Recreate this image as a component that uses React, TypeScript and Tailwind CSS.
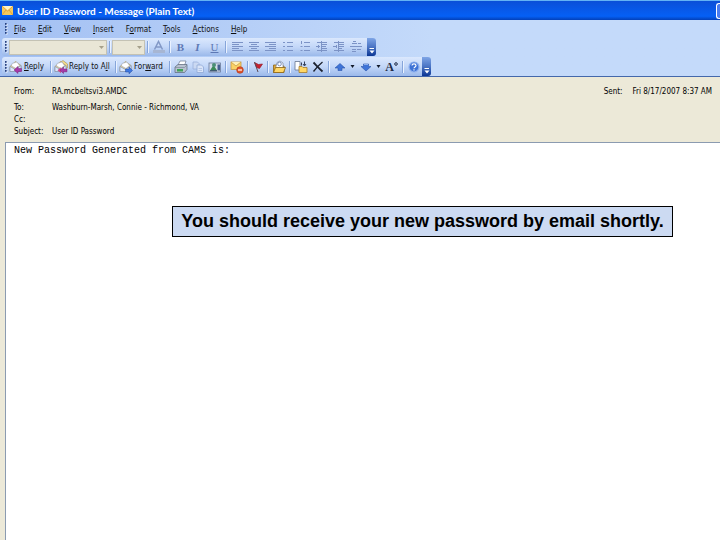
import type { ReactNode } from 'react'
import clsx from 'clsx'

type IconProps = { children: ReactNode }

function Icon({ children }: IconProps) {
  return (
    <svg viewBox="0 0 14 14" className="h-3.5 w-3.5 shrink-0" fill="none" aria-hidden="true">
      {children}
    </svg>
  )
}

function ToolButton({ label, narrow, disabled, children }: { label: string; narrow?: boolean; disabled?: boolean; children: ReactNode }) {
  return (
    <button
      type="button"
      aria-label={label}
      disabled={disabled}
      className={clsx('flex h-full shrink-0 items-center justify-center', narrow ? 'w-[15px]' : 'w-[17px]')}
    >
      {children}
    </button>
  )
}

function Separator() {
  return (
    <span className="flex h-3 w-[5px] shrink-0 justify-center">
      <span className="w-px bg-[#86a5da]" />
      <span className="w-px bg-[#eaf2ff]" />
    </span>
  )
}

function Grip() {
  return (
    <svg viewBox="0 0 4 12" className="h-3 w-1 shrink-0" aria-hidden="true">
      {[0, 3, 6, 9].map((y) => (
        <g key={y}>
          <rect x="2" y={y + 1} width="1.5" height="1.5" fill="#f4f8ff" />
          <rect x="1" y={y} width="1.6" height="1.8" fill="#27417f" />
        </g>
      ))}
    </svg>
  )
}

function Caret() {
  return (
    <button type="button" aria-label="More" className="flex h-full w-[9px] shrink-0 items-center justify-center">
      <svg viewBox="0 0 5 3" className="h-[3px] w-[5px]" aria-hidden="true">
        <path d="M0.5 0h4L2.5 3z" fill="#101828" />
      </svg>
    </button>
  )
}

function ToolbarEnd() {
  return (
    <button
      type="button"
      aria-label="Toolbar options"
      className="flex h-full w-[9px] shrink-0 items-end justify-center rounded-r-[3px] bg-linear-to-b from-[#7fa5e6] via-[#4a74c4] to-[#0b3593] pb-0.5"
    >
      <svg viewBox="0 0 6 6" className="h-1.5 w-1.5" aria-hidden="true">
        <path d="M0.5 0h4.5v1H0.5zM0.5 2.5h5L3 5.5z" fill="#fff" />
      </svg>
    </button>
  )
}

function Combo({ label, wide }: { label: string; wide?: boolean }) {
  return (
    <span className={clsx('relative h-[15px] shrink-0', wide ? 'w-[98px]' : 'w-[33px]')}>
      <select
        aria-label={label}
        disabled
        className="block h-full w-full appearance-none border border-[#c4c2b4] bg-[#e9e6d6] opacity-100"
      />
      <svg viewBox="0 0 5 3" className="absolute top-1.5 right-[3px] h-[3px] w-[5px]" aria-hidden="true">
        <path d="M0 0h5L2.5 3z" fill="#a5a08b" />
      </svg>
    </span>
  )
}

function Envelope() {
  return (
    <>
      <path d="M1 6.5L6.5 1.5L12 5.5V11.5H1z" fill="#f5d77b" stroke="#a89a68" strokeWidth="0.7" />
      <path d="M3 3.5L8 2L10.5 5.5L7 8.5L2.5 6z" fill="#fff" stroke="#9aa5bd" strokeWidth="0.6" />
      <path d="M1 6.5L6.5 9.5L12 5.5V11.5H1z" fill="#dce8fb" stroke="#7f92ba" strokeWidth="0.7" />
    </>
  )
}

function ReplyIcon() {
  return (
    <Icon>
      <Envelope />
      <path d="M5 10L9 6.5V8.5H12.5V11.5H9V13.5z" fill="#a838a8" stroke="#74207a" strokeWidth="0.5" />
    </Icon>
  )
}

function ReplyAllIcon() {
  return (
    <Icon>
      <path d="M4 4L9 0.5L13.5 4V8H4z" fill="#f7dc8a" stroke="#a89a68" strokeWidth="0.7" />
      <Envelope />
      <path d="M3.5 10.3L7 7.3V13.3z" fill="#d04a8c" />
      <path d="M6 10.3L9.5 7V9H13V11.8H9.5V13.5z" fill="#a838a8" stroke="#74207a" strokeWidth="0.5" />
    </Icon>
  )
}

function ForwardIcon() {
  return (
    <Icon>
      <Envelope />
      <path d="M13.5 10.5L10 7V9H6.5V12H10V13.8z" fill="#3e78e0" stroke="#1c459c" strokeWidth="0.5" />
    </Icon>
  )
}

function LinesIcon({ d }: { d: string }) {
  return (
    <Icon>
      <path d={d} stroke="#7c93c6" strokeWidth="1" />
    </Icon>
  )
}

const menus = ['File', 'Edit', 'View', 'Insert', 'Format', 'Tools', 'Actions', 'Help']
// index of the underlined letter in each menu name
const accelerators = [0, 0, 0, 0, 1, 0, 0, 0]

const paragraphTools = [
  { label: 'Align left', d: 'M2 2.5h11M2 4.5h7M2 6.5h11M2 8.5h7M2 10.5h11' },
  { label: 'Center', d: 'M2 2.5h10M4 4.5h6M2 6.5h10M4 8.5h6M2 10.5h10' },
  { label: 'Align right', d: 'M1 2.5h11M5 4.5h7M1 6.5h11M5 8.5h7M1 10.5h11' },
  { label: 'Bullets', d: 'M2 2.5h2M2 6.5h2M2 10.5h2M6 2.5h6M6 6.5h6M6 10.5h6' },
  { label: 'Numbering', d: 'M3.5 1v3M2.5 6.5h2M2.5 10.5h2M6 2.5h6M6 6.5h6M6 10.5h6' },
  { label: 'Decrease indent', d: 'M2 2.5h10M7 4.5h5M1 6.5h4M7 6.5h4M7 8.5h5M2 10.5h10M3.5 5v3M6.5 1v11' },
  { label: 'Increase indent', d: 'M2 2.5h10M7 4.5h5M1 6.5h4M7 6.5h5M7 8.5h3M2 10.5h10M4.5 5v3M6.5 1v11' },
  { label: 'Horizontal line', d: 'M4 1.5h3M3 3.5h5M9 3.5h3M1 6.5h12M3 9.5h4M8 9.5h4M3 11.5h4' },
]

const fields = [
  { name: 'To:', value: 'Washburn-Marsh, Connie - Richmond, VA' },
  { name: 'Cc:', value: '' },
  { name: 'Subject:', value: 'User ID Password' },
]

function TitleBar() {
  return (
    <header className="flex h-5 items-center overflow-hidden border-t border-[#63b2f5] bg-linear-to-b from-[#0a4fd8] via-[#0560f5] via-80% to-[#0340b8] pl-0.5">
      <svg viewBox="0 0 11 9" className="h-[9px] w-[11px] shrink-0" aria-hidden="true">
        <rect width="11" height="9" fill="#f6c95c" />
        <path d="M0 0L5.5 4.5L11 0z" fill="#fff3c4" />
        <path d="M0 0L5.5 5L11 0M0 9L4 4M11 9L7 4" stroke="#d4902b" strokeWidth="0.7" fill="none" />
      </svg>
      <h1 className="ml-1 flex-1 whitespace-nowrap font-['Lato',sans-serif] text-[10px] font-bold text-white">
        User ID Password - Message (Plain Text)
      </h1>
      <button
        type="button"
        aria-label="Minimize"
        className="h-4 w-1 rounded-l-[3px] border border-r-0 border-white bg-[#4a7df0]"
      />
    </header>
  )
}

function MenuBar() {
  return (
    <nav className="flex h-[18px] items-center pl-1">
      <Grip />
      <div className="flex pt-0.5">
        {menus.map((menu, i) => (
          <button key={menu} type="button" className="px-1.5">
            {menu.slice(0, accelerators[i])}
            <span className="underline">{menu[accelerators[i]]}</span>
            {menu.slice(accelerators[i] + 1)}
          </button>
        ))}
      </div>
    </nav>
  )
}

function FormatToolbar() {
  return (
    <div className="flex h-[18px] w-fit items-center rounded-[3px] bg-linear-to-b from-[#dbe8fd] via-[#c3d7f8] to-[#9bb9ea] pl-0.5">
      <Grip />
      <div className="ml-px flex items-center">
        <Combo label="Font" wide />
        <Separator />
        <Combo label="Font size" />
      </div>
      <Separator />
      <ToolButton label="Font color" disabled>
        <Icon>
          <path d="M2.5 9.5L6.5 1.5L10.5 9.5M4 7h5" stroke="#8298c6" strokeWidth="1.5" />
          <rect x="1" y="10" width="12" height="3" fill="#a7b6d3" />
        </Icon>
      </ToolButton>
      <Separator />
      <ToolButton label="Bold" disabled>
        <span className="font-['Liberation_Serif',serif] text-[11px] font-bold text-[#5d78b4]">B</span>
      </ToolButton>
      <ToolButton label="Italic" disabled>
        <span className="font-['Liberation_Serif',serif] text-[11px] font-bold text-[#5d78b4] italic">I</span>
      </ToolButton>
      <ToolButton label="Underline" disabled>
        <span className="font-['Liberation_Serif',serif] text-[11px] text-[#5d78b4] underline">U</span>
      </ToolButton>
      <Separator />
      {paragraphTools.map((tool) => (
        <ToolButton key={tool.label} label={tool.label} disabled>
          <LinesIcon d={tool.d} />
        </ToolButton>
      ))}
      <span className="w-[3px]" />
      <ToolbarEnd />
    </div>
  )
}

function StandardToolbar() {
  return (
    <div className="flex h-[19px] w-fit items-center rounded-[3px] bg-linear-to-b from-[#dbe8fd] via-[#c3d7f8] to-[#9bb9ea] pl-0.5">
      <Grip />
      <button type="button" className="flex w-10 items-center gap-px pl-px whitespace-nowrap">
        <ReplyIcon />
        <span>
          <span className="underline">R</span>eply
        </span>
      </button>
      <Separator />
      <button type="button" className="flex w-[60px] items-center gap-px pl-px whitespace-nowrap">
        <ReplyAllIcon />
        <span>
          Reply to A<span className="underline">l</span>l
        </span>
      </button>
      <Separator />
      <button type="button" className="flex w-[49px] items-center gap-px pl-px whitespace-nowrap">
        <ForwardIcon />
        <span>
          For<span className="underline">w</span>ard
        </span>
      </button>
      <Separator />
      <ToolButton label="Print">
        <Icon>
          <path d="M4 5L6 1H12L10.5 5.5z" fill="#fff" stroke="#6b7890" strokeWidth="0.7" />
          <path d="M1 7L4 4.5H13V9.5L10.5 12.5H1z" fill="#b9c2cf" stroke="#5a6679" strokeWidth="0.7" />
          <path d="M1 7.5H10.5L13 5" stroke="#7b8699" strokeWidth="0.7" />
          <rect x="3" y="9" width="6" height="2.5" fill="#41a15a" />
        </Icon>
      </ToolButton>
      <ToolButton label="Copy" disabled>
        <Icon>
          <path d="M2 2H6.5L8 3.5V9H2z" fill="#cbd9f2" stroke="#9bb0da" strokeWidth="0.8" />
          <path d="M6 5H10.5L12.5 7V12.5H6z" fill="#d9e4f8" stroke="#91a8d6" strokeWidth="0.8" />
          <path d="M7.5 8.5h3.5M7.5 10.5h3.5" stroke="#9bb0da" strokeWidth="0.6" />
        </Icon>
      </ToolButton>
      <ToolButton label="Block sender">
        <Icon>
          <rect x="1" y="3" width="11.5" height="9" fill="#d4dceb" stroke="#66789a" strokeWidth="0.8" />
          <path d="M2 10.5L5.5 5L9 10.5z" fill="#3b8a57" />
          <circle cx="6" cy="5" r="2" fill="#4c8f78" />
          <path d="M9.5 4.5h2.5v6H9.5z" fill="#44608f" />
          <path d="M2 10.8h7" stroke="#21395f" strokeWidth="1" />
        </Icon>
      </ToolButton>
      <Separator />
      <ToolButton label="Junk e-mail">
        <Icon>
          <rect x="1" y="2" width="10" height="7.5" fill="#fbd266" stroke="#c79a44" strokeWidth="0.8" />
          <path d="M1 2L6 6L11 2" fill="#fff0b5" stroke="#c79a44" strokeWidth="0.8" />
          <circle cx="10" cy="10" r="3.3" fill="#e2552b" stroke="#a82f16" strokeWidth="0.6" />
          <path d="M8 10h4" stroke="#fff" strokeWidth="1.2" />
        </Icon>
      </ToolButton>
      <Separator />
      <ToolButton label="Follow up" narrow>
        <Icon>
          <path d="M3.5 2.5L7.5 4.5L11.5 4L8.5 8.5L5.5 7.5z" fill="#c8202f" stroke="#8c1521" strokeWidth="0.6" />
          <path d="M3.5 2L7 12" stroke="#5b4a55" strokeWidth="1" />
        </Icon>
      </ToolButton>
      <Separator />
      <ToolButton label="Move to folder">
        <Icon>
          <path d="M1.5 5H5L6 6H12V12.5H1.5z" fill="#e2a936" stroke="#8b6418" strokeWidth="0.8" />
          <path d="M4 6.5L5 2.5L8 1L11 3V8H4z" fill="#fff" stroke="#7584a0" strokeWidth="0.7" />
          <circle cx="7.5" cy="4" r="1.8" stroke="#5a77b0" strokeWidth="0.8" />
          <path d="M3.5 7.5H13.5L11.5 12.5H1.5z" fill="#ffd766" stroke="#8b6418" strokeWidth="0.8" />
        </Icon>
      </ToolButton>
      <Separator />
      <ToolButton label="Create rule">
        <Icon>
          <path d="M1 1.5H6V10H1z" fill="#fff" stroke="#66758f" strokeWidth="0.8" />
          <path d="M7.5 2.5v3M10.5 1.5v4M9 4L10.5 6L12 4" stroke="#34425e" strokeWidth="1" />
          <path d="M5 6.5H8L9 7.5H13V12.5H5z" fill="#ffd766" stroke="#a67c2a" strokeWidth="0.8" />
        </Icon>
      </ToolButton>
      <ToolButton label="Delete">
        <Icon>
          <path d="M2.5 2.5C5 5 8 8.5 11.5 11.5" stroke="#1c2230" strokeWidth="1.8" />
          <path d="M11.5 2C8 5 5 8 2.5 11.5" stroke="#1c2230" strokeWidth="1.3" />
        </Icon>
      </ToolButton>
      <Separator />
      <ToolButton label="Previous item">
        <Icon>
          <path d="M7 3.5L12 8H9V10.5H5V8H2z" fill="#3f74d8" stroke="#2a56ab" strokeWidth="0.6" />
        </Icon>
      </ToolButton>
      <Caret />
      <ToolButton label="Next item">
        <Icon>
          <path d="M7 11L12 6.5H9.5V4H4.5V6.5H2z" fill="#3f74d8" stroke="#2a56ab" strokeWidth="0.6" />
          <path d="M5 4.5h4" stroke="#9fc0f6" strokeWidth="0.8" />
        </Icon>
      </ToolButton>
      <Caret />
      <ToolButton label="Font size">
        <span className="font-['Liberation_Serif',serif] text-[12px] leading-3 font-bold text-[#1d2a45]">A</span>
        <svg viewBox="0 0 4 10" className="h-2.5 w-1" aria-hidden="true">
          <circle cx="2" cy="2" r="1.3" fill="none" stroke="#1d2a45" />
        </svg>
      </ToolButton>
      <Separator />
      <ToolButton label="Help">
        <Icon>
          <circle cx="7" cy="7" r="5" fill="#3e73d6" stroke="#8fb1ee" strokeWidth="1.2" />
          <path d="M5 5.6C5 3.4 9 3.4 9 5.6C9 7 7 6.9 7 8.3M7 9.3v1.3" stroke="#fff" strokeWidth="1.2" />
        </Icon>
      </ToolButton>
      <ToolbarEnd />
    </div>
  )
}

export default function App() {
  return (
    <main className="flex min-h-screen flex-col bg-[#ece9d8] font-['DejaVu_Sans_Condensed','DejaVu_Sans',sans-serif] text-[8px] leading-3 text-[#101010]">
      <TitleBar />
      <div className="border-b border-[#4468ab] bg-linear-to-r from-[#a3c0f3] to-[#c4dafa] to-60%">
        <MenuBar />
        <div className="flex flex-col gap-px pl-0.5">
          <FormatToolbar />
          <StandardToolbar />
        </div>
      </div>

      <section className="px-3.5 pt-[9px] pb-1 text-black">
        <div className="-mr-1.5 mb-1 flex justify-between">
          <dl className="flex">
            <dt className="w-[38px]">From:</dt>
            <dd>RA.mcbeltsvi3.AMDC</dd>
          </dl>
          <dl className="flex gap-2.5">
            <dt>Sent:</dt>
            <dd>Fri 8/17/2007 8:37 AM</dd>
          </dl>
        </div>
        <dl>
          {fields.map((field) => (
            <div key={field.name} className="flex">
              <dt className="w-[38px]">{field.name}</dt>
              <dd>{field.value}</dd>
            </div>
          ))}
        </dl>
      </section>

      <article className="ml-[5px] flex flex-1 flex-col border-t border-l border-[#8b9bb0] bg-white">
        <p className="pt-0.5 pl-2 font-['Liberation_Mono',monospace] text-[10px] text-black">
          New Password Generated from CAMS is:
        </p>
        <p className="mt-[49px] mr-[47px] ml-[166px] border border-black bg-[#ccdaf2] py-1 text-center font-['Liberation_Sans',sans-serif] text-lg leading-[21px] font-bold whitespace-nowrap text-black">
          You should receive your new password by email shortly.
        </p>
      </article>
    </main>
  )
}
